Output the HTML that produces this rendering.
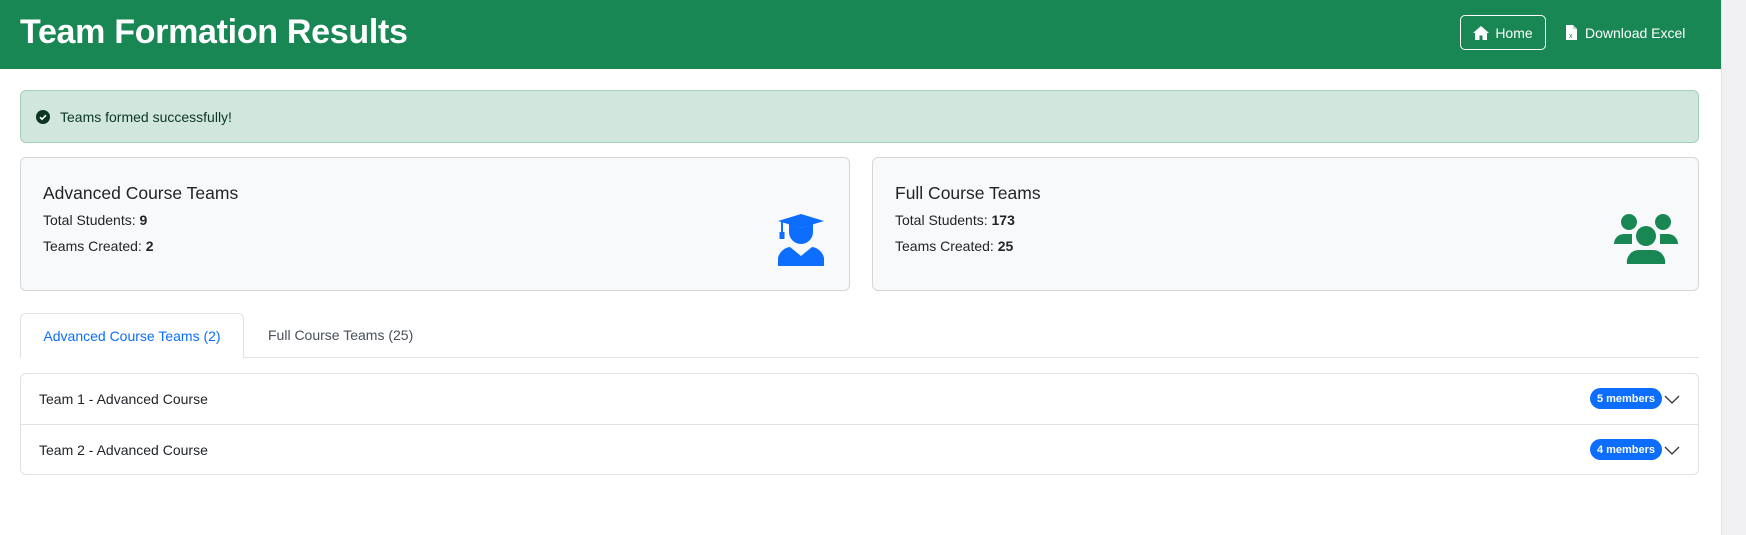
<!DOCTYPE html>
<html><head><meta charset="utf-8"><style>
*{box-sizing:border-box;margin:0;padding:0}
body{width:1746px;height:535px;overflow:hidden;background:#fff;font-family:"Liberation Sans",sans-serif;color:#212529;position:relative}
.sb{position:absolute;left:1721px;top:0;width:25px;height:535px;background:#f1f1f3;border-left:1px solid #e2e2e5}
.hdr{position:absolute;left:0;top:0;width:1721px;height:69px;background:#198754}
.hdr h1{position:absolute;left:20px;top:13px;font-size:34px;font-weight:bold;color:#fff;letter-spacing:-0.3px}
.home{position:absolute;left:1460px;top:15px;width:86px;height:35px;border:1px solid #fff;border-radius:5px;color:#fff;font-size:14px;display:flex;align-items:center;justify-content:center;gap:6px}
.dl{position:absolute;left:1566px;top:15px;height:35px;color:#fff;font-size:14px;display:flex;align-items:center;gap:8px}
.alert{position:absolute;left:20px;top:90px;width:1679px;height:53px;background:#d1e7dd;border:1px solid #a3cfbb;border-radius:6px;color:#0a3622;font-size:14px;display:flex;align-items:center;padding-left:15px;gap:10px}
.card{position:absolute;top:157px;height:134px;background:#f8f9fa;border:1px solid #d3d5d7;border-radius:6px}
.card h3{position:absolute;left:22px;top:25px;font-size:17.5px;font-weight:normal}
.card .l1{position:absolute;left:22px;top:54px;font-size:14px}
.card .l2{position:absolute;left:22px;top:80px;font-size:14px}
.card svg{position:absolute}
.tab1{position:absolute;left:20px;top:313px;width:224px;height:45px;border:1px solid #dee2e6;border-bottom:none;border-radius:6px 6px 0 0;background:#fff;color:#0d6efd;font-size:14px;display:flex;align-items:center;justify-content:center}
.tab2{position:absolute;left:268px;top:313px;height:44px;color:#495057;font-size:14px;display:flex;align-items:center}
.tline{position:absolute;left:244px;top:357px;width:1455px;height:1px;background:#dee2e6}
.acc{position:absolute;left:20px;top:373px;width:1679px;height:102px;border:1px solid #dee2e6;border-radius:6px}
.row{position:absolute;left:0;width:100%;height:50px;font-size:14px;display:flex;align-items:center;padding-left:18px}
.badge{position:absolute;left:1569px;width:72px;height:21px;background:#0d6efd;color:#fff;border-radius:11px;font-size:11px;font-weight:bold;display:flex;align-items:center;justify-content:center}
.chev{position:absolute;left:1643px}
</style></head><body>
<div class="hdr"><h1>Team Formation Results</h1>
<div class="home"><svg width="16" height="14" viewBox="0 0 16 14"><path d="M8 0L0 7h2v7h4.5V9.5h3V14H14V7h2z" fill="#fff"/></svg>Home</div>
<div class="dl"><svg width="11" height="15" viewBox="0 0 11 15"><path d="M0 0h7l4 4v11H0z" fill="#fff"/><path d="M7 0v4h4" fill="#ccc"/><text x="3" y="13" font-size="7" fill="#198754" font-family="Liberation Sans">x</text></svg>Download Excel</div>
</div>
<div class="sb"></div>
<div class="alert"><svg width="14" height="14" viewBox="0 0 14 14"><circle cx="7" cy="7" r="7" fill="#0a3622"/><path d="M4 7.2l2 2 4-4" stroke="#fff" stroke-width="1.6" fill="none"/></svg>Teams formed successfully!</div>
<div class="card" style="left:20px;width:830px">
<h3>Advanced Course Teams</h3>
<div class="l1">Total Students: <b>9</b></div>
<div class="l2">Teams Created: <b>2</b></div>
<svg style="left:757px;top:56px" width="46" height="52" viewBox="0 0 46 52"><path d="M23 0L46 7 23 14 0 7z" fill="#0d6efd"/><rect x="3" y="8" width="2" height="12" fill="#0d6efd"/><rect x="1.5" y="18" width="5" height="7" fill="#0d6efd"/><path d="M11 10v8a12 12 0 0 0 24 0v-8l-12 4z" fill="#0d6efd"/><path d="M0 52v-8a14 14 0 0 1 12-11l11 9 11-9a14 14 0 0 1 12 11v8z" fill="#0d6efd"/></svg>
</div>
<div class="card" style="left:872px;width:827px">
<h3>Full Course Teams</h3>
<div class="l1">Total Students: <b>173</b></div>
<div class="l2">Teams Created: <b>25</b></div>
<svg style="left:741px;top:56px" width="64" height="52" viewBox="0 0 64 52"><circle cx="15" cy="8" r="8" fill="#198754"/><circle cx="49" cy="8" r="8" fill="#198754"/><path d="M0 30a10 10 0 0 1 10-10h8v10z" fill="#198754"/><path d="M64 30a10 10 0 0 0-10-10h-8v10z" fill="#198754"/><circle cx="32" cy="22" r="10" fill="#198754"/><path d="M13 50a12 12 0 0 1 12-14h14a12 12 0 0 1 12 14z" fill="#198754"/></svg>
</div>
<div class="tab1">Advanced Course Teams (2)</div>
<div class="tab2">Full Course Teams (25)</div>
<div class="tline"></div>
<div class="acc">
<div class="row" style="top:0;border-bottom:1px solid #dee2e6;height:51px">Team 1 - Advanced Course
<div class="badge" style="top:14px">5 members</div><svg class="chev" style="top:21px" width="16" height="10" viewBox="0 0 16 10"><path d="M1 1l7 7 7-7" stroke="#333" stroke-width="1.3" fill="none"/></svg></div>
<div class="row" style="top:51px">Team 2 - Advanced Course
<div class="badge" style="top:14px">4 members</div><svg class="chev" style="top:21px" width="16" height="10" viewBox="0 0 16 10"><path d="M1 1l7 7 7-7" stroke="#333" stroke-width="1.3" fill="none"/></svg></div>
</div>
</body></html>
